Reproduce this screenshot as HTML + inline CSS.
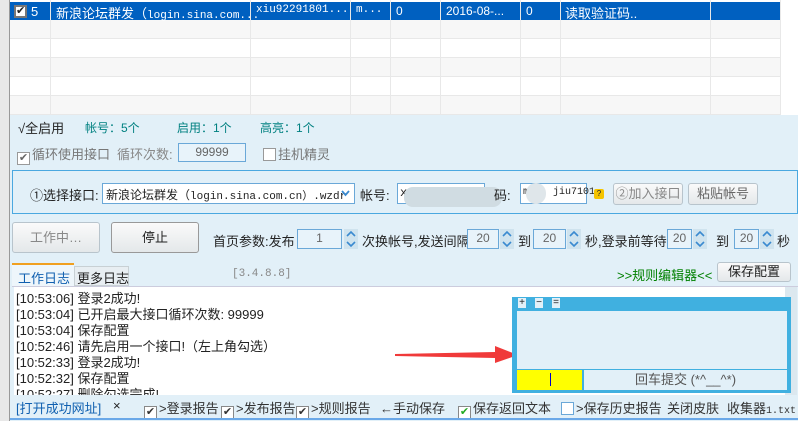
<html><head><style>
*{margin:0;padding:0;box-sizing:border-box}
body{width:798px;height:421px;overflow:hidden;background:#e2f0f8;font-family:"Liberation Sans","Noto Sans CJK SC",sans-serif;font-size:12px;color:#222;position:relative}
.a{position:absolute;white-space:nowrap}
.m{font-family:"Liberation Mono","Noto Sans CJK SC",monospace}
.row{position:absolute;left:10px;width:770px;height:19px;border-bottom:1px solid #e8e8e8}
.vl{position:absolute;top:0;width:1px;height:115px;background:#e8e8e8}
.inp{position:absolute;background:#e8f3fa;border:1px solid #6aa8d8;color:#666;text-align:center;font-size:12px;line-height:17px}
.btn{position:absolute;border:1px solid #b8c4cc;border-radius:3px;background:linear-gradient(#fafafa,#e4e8ea);text-align:center;color:#222}
.sp{position:absolute;width:14px;height:20px;background:#cfe3ee}
.cb{display:inline-block;width:13px;height:13px;border:1px solid #888;background:#fff;vertical-align:-2px;margin-right:2px;font-size:11px;line-height:11px;text-align:center}
.lg{position:absolute;left:16px;font-size:13px;font-family:"Liberation Sans","Noto Sans CJK SC",sans-serif}
</style></head><body>
<svg width="0" height="0" style="position:absolute"><defs><symbol id="ud" viewBox="0 0 14 20"><path d="M3 7 L7 3 L11 7 M3 13 L7 17 L11 13" fill="none" stroke="#3a8ad0" stroke-width="1.6"/></symbol></defs></svg>
<div class="a" style="left:0;top:0;width:10px;height:421px;background:#e8e8e8;border-right:1px solid #999"></div>
<div class="a" style="left:10px;top:0;width:788px;height:115px;background:#fff"></div>
<div class="row" style="top:2px;height:18px;background:#0060c0;border:0"></div>
<div class="row" style="top:20px;background:#f7f7f7"></div>
<div class="row" style="top:39px;background:#fff"></div>
<div class="row" style="top:58px;background:#f7f7f7"></div>
<div class="row" style="top:77px;background:#fff"></div>
<div class="row" style="top:96px;background:#f7f7f7"></div>
<div class="vl" style="left:50px"></div><div class="vl" style="left:250px"></div><div class="vl" style="left:350px"></div><div class="vl" style="left:390px"></div><div class="vl" style="left:440px"></div><div class="vl" style="left:520px"></div><div class="vl" style="left:560px"></div><div class="vl" style="left:710px"></div><div class="vl" style="left:780px"></div>
<div class="a" style="left:14px;top:5px;width:13px;height:13px;background:#fff;border:2px solid #777;font-size:11px;line-height:9px;text-align:center">✔</div>
<div class="a" style="left:31px;top:4px;color:#fff;font-size:13px">5</div>
<div class="a m" style="left:56px;top:3px;color:#fff;font-size:13px">新浪论坛群发（<span style="font-size:11px">login.sina.com...</span></div>
<div class="a m" style="left:256px;top:4px;color:#fff;font-size:11px">xiu92291801...</div>
<div class="a m" style="left:356px;top:4px;color:#fff;font-size:11px">m...</div>
<div class="a" style="left:396px;top:4px;color:#fff">0</div>
<div class="a" style="left:446px;top:4px;color:#fff">2016-08-...</div>
<div class="a" style="left:526px;top:4px;color:#fff">0</div>
<div class="a" style="left:565px;top:3px;color:#fff;font-size:13px">读取验证码..</div>

<div class="a" style="left:18px;top:118px;font-size:13px">√全启用</div>
<div class="a" style="left:85px;top:119px;color:#008080">帐号：5个</div>
<div class="a" style="left:177px;top:119px;color:#008080">启用：1个</div>
<div class="a" style="left:260px;top:119px;color:#008080">高亮：1个</div>
<div class="a" style="left:17px;top:144px;color:#777;font-size:13px"><span class="cb" style="border-color:#999;color:#666">✔</span>循环使用接口</div>
<div class="a" style="left:117px;top:144px;color:#888;font-size:13px">循环次数:</div>
<div class="inp" style="left:178px;top:143px;width:68px;height:19px">99999</div>
<div class="a" style="left:263px;top:144px;color:#777;font-size:13px"><span class="cb" style="border-color:#999"></span>挂机精灵</div>

<div class="a" style="left:12px;top:170px;width:786px;height:44px;border:1px solid #4aa8e0"></div>
<div class="a" style="left:30px;top:185px;font-size:13px">①选择接口:</div>
<div class="a m" style="left:102px;top:183px;width:253px;height:21px;background:#fff;border:1px solid #6aa8d8;padding:2px 3px;font-size:11px;overflow:hidden"><span style="font-size:12px">新浪论坛群发（</span>login.sina.com.cn）.wzdr<svg style="position:absolute;right:4px;top:5px" width="9" height="8"><path d="M1 2 L4.5 6 L8 2" fill="none" stroke="#3a8ad0" stroke-width="1.8"/></svg></div>
<div class="a" style="left:360px;top:185px;font-size:13px">帐号:</div>
<div class="a m" style="left:397px;top:183px;width:88px;height:21px;background:#fff;border:1px solid #6aa8d8;padding:2px">x</div>
<div class="a" style="left:404px;top:187px;width:98px;height:20px;background:#d0dce2;border-radius:9px"></div>
<div class="a" style="left:494px;top:185px;font-size:13px">码:</div>
<div class="a m" style="left:520px;top:183px;width:67px;height:21px;background:#fff;border:1px solid #6aa8d8;padding:3px 2px;font-size:10px">m&nbsp;&nbsp;&nbsp;&nbsp;jiu7101</div>
<div class="a" style="left:526px;top:183px;width:20px;height:21px;background:#dfe6ea;border-radius:10px"></div>
<div class="a" style="left:594px;top:189px;width:10px;height:10px;background:#f5c400;border-radius:2px;font-size:8px;line-height:10px;text-align:center">?</div>
<div class="btn" style="left:613px;top:183px;width:70px;height:22px;line-height:20px;color:#888;font-size:13px">②加入接口</div>
<div class="btn" style="left:688px;top:183px;width:70px;height:22px;line-height:20px;color:#666;font-size:13px">粘贴帐号</div>

<div class="btn" style="left:12px;top:222px;width:88px;height:31px;line-height:29px;color:#888;font-size:13px">工作中…</div>
<div class="btn" style="left:111px;top:222px;width:88px;height:31px;line-height:29px;font-size:13px;border-color:#999">停止</div>
<div class="a" style="left:213px;top:231px;font-size:13px">首页参数:发布</div>
<div class="inp" style="left:297px;top:229px;width:45px;height:20px">1</div>
<svg class="sp" style="left:344px;top:229px"><use href="#ud"/></svg>
<div class="a" style="left:362px;top:231px;font-size:13px">次换帐号,发送间隔</div>
<div class="inp" style="left:467px;top:229px;width:32px;height:20px">20</div><svg class="sp" style="left:500px;top:229px"><use href="#ud"/></svg>
<div class="a" style="left:518px;top:231px;font-size:13px">到</div>
<div class="inp" style="left:533px;top:229px;width:33px;height:20px">20</div><svg class="sp" style="left:567px;top:229px"><use href="#ud"/></svg>
<div class="a" style="left:585px;top:231px;font-size:13px">秒,登录前等待</div>
<div class="inp" style="left:667px;top:229px;width:25px;height:20px">20</div><svg class="sp" style="left:693px;top:229px"><use href="#ud"/></svg>
<div class="a" style="left:716px;top:231px;font-size:13px">到</div>
<div class="inp" style="left:734px;top:229px;width:25px;height:20px">20</div><svg class="sp" style="left:760px;top:229px"><use href="#ud"/></svg>
<div class="a" style="left:777px;top:231px;font-size:13px">秒</div>

<div class="a" style="left:12px;top:263px;width:62px;height:24px;background:#eef6fb;border-top:2px solid #f0a020;color:#1060b0;font-size:13px;padding:3px 0 0 6px">工作日志</div>
<div class="a" style="left:74px;top:266px;width:55px;height:20px;background:#e8eef2;border:1px solid #c8d0d4;font-size:13px;padding:1px 0 0 2px">更多日志</div>
<div class="a m" style="left:232px;top:268px;color:#888;font-size:11px">[3.4.8.8]</div>
<div class="a" style="left:617px;top:265px;color:#008000;font-size:13px">&gt;&gt;规则编辑器&lt;&lt;</div>
<div class="btn" style="left:717px;top:262px;width:74px;height:20px;line-height:18px;font-size:13px">保存配置</div>

<div class="a" style="left:12px;top:286px;width:786px;height:1px;background:#ccd"></div>
<div class="a" style="left:14px;top:287px;width:771px;height:108px;background:#fff;overflow:hidden">
<div class="lg" style="top:1px;left:2px">[10:53:06] 登录2成功!</div>
<div class="lg" style="top:17px;left:2px">[10:53:04] 已开启最大接口循环次数: 99999</div>
<div class="lg" style="top:33px;left:2px">[10:53:04] 保存配置</div>
<div class="lg" style="top:49px;left:2px">[10:52:46] 请先启用一个接口!（左上角勾选）</div>
<div class="lg" style="top:65px;left:2px">[10:52:33] 登录2成功!</div>
<div class="lg" style="top:81px;left:2px">[10:52:32] 保存配置</div>
<div class="lg" style="top:97px;left:2px">[10:52:27] 删除勾选完成!</div>
</div>
<div class="a" style="left:785px;top:287px;width:12px;height:108px;background:#dce8ef"></div>
<svg class="a" style="left:395px;top:345px" width="125" height="20"><polygon points="0,9 100,7 100,1 123,10 100,18 100,13 0,11" fill="#f03a3a"/></svg>

<div class="a" style="left:512px;top:297px;width:279px;height:96px;background:#40b0e0"></div>
<div class="a" style="left:517px;top:311px;width:270px;height:58px;background:#e2f0f8"></div>
<div class="a" style="left:517px;top:370px;width:65px;height:20px;background:#ff0"></div>
<div class="a" style="left:550px;top:373px;width:1px;height:13px;background:#00c"></div>
<div class="a" style="left:584px;top:370px;width:203px;height:20px;background:#e2f0f8;text-align:center;color:#555;line-height:20px;font-size:13px">回车提交 (*^__^*)</div>
<div class="a" style="left:518px;top:298px;width:8px;height:10px;background:#e2f0f8;font-size:10px;line-height:10px;text-align:center">+</div>
<div class="a" style="left:535px;top:298px;width:8px;height:10px;background:#e2f0f8;font-size:10px;line-height:10px;text-align:center">−</div>
<div class="a" style="left:552px;top:298px;width:8px;height:10px;background:#e2f0f8;font-size:10px;line-height:10px;text-align:center">=</div>

<div class="a" style="left:16px;top:398px;color:#1060b0;font-size:13px">[打开成功网址]</div>
<div class="a" style="left:113px;top:398px;font-size:13px">×</div>
<div class="a" style="left:144px;top:398px;font-size:13px;color:#333"><span class="cb">✔</span>&gt;登录报告</div>
<div class="a" style="left:221px;top:398px;font-size:13px;color:#333"><span class="cb">✔</span>&gt;发布报告</div>
<div class="a" style="left:296px;top:398px;font-size:13px;color:#333"><span class="cb">✔</span>&gt;规则报告</div>
<div class="a" style="left:380px;top:398px;font-size:13px;color:#333">←手动保存</div>
<div class="a" style="left:458px;top:398px;font-size:13px;color:#333"><span class="cb" style="color:#2a2">✔</span>保存返回文本</div>
<div class="a" style="left:561px;top:398px;font-size:13px;color:#333"><span class="cb" style="border-color:#6aa8d8"></span>&gt;保存历史报告</div>
<div class="a" style="left:667px;top:398px;font-size:13px;color:#333">关闭皮肤</div>
<div class="a" style="left:727px;top:398px;font-size:13px;color:#333">收集器<span class="m" style="font-size:10px">1.txt</span></div>
<div class="a" style="left:10px;top:418px;width:788px;height:2px;background:#6aa8e8"></div>
</body></html>
